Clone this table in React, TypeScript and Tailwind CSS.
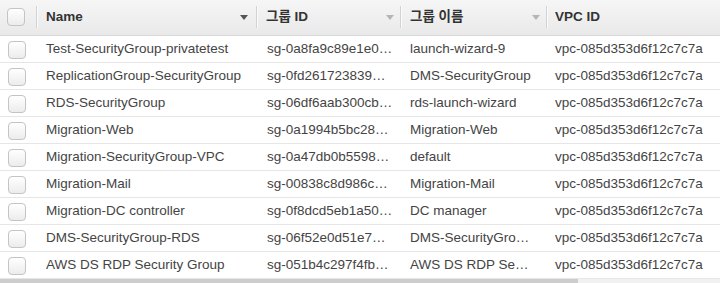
import React from "react";

const rows = [
  ["Test-SecurityGroup-privatetest", "sg-0a8fa9c89e1e0…", "launch-wizard-9", "vpc-085d353d6f12c7c7a"],
  ["ReplicationGroup-SecurityGroup", "sg-0fd261723839…", "DMS-SecurityGroup", "vpc-085d353d6f12c7c7a"],
  ["RDS-SecurityGroup", "sg-06df6aab300cb…", "rds-launch-wizard", "vpc-085d353d6f12c7c7a"],
  ["Migration-Web", "sg-0a1994b5bc28…", "Migration-Web", "vpc-085d353d6f12c7c7a"],
  ["Migration-SecurityGroup-VPC", "sg-0a47db0b5598…", "default", "vpc-085d353d6f12c7c7a"],
  ["Migration-Mail", "sg-00838c8d986c…", "Migration-Mail", "vpc-085d353d6f12c7c7a"],
  ["Migration-DC controller", "sg-0f8dcd5eb1a50…", "DC manager", "vpc-085d353d6f12c7c7a"],
  ["DMS-SecurityGroup-RDS", "sg-06f52e0d51e7…", "DMS-SecurityGro…", "vpc-085d353d6f12c7c7a"],
  ["AWS DS RDP Security Group", "sg-051b4c297f4fb…", "AWS DS RDP Se…", "vpc-085d353d6f12c7c7a"],
];

function Checkbox() {
  return (
    <div className="w-[18px] h-[18px] rounded-[4px] border border-[#c4c4c4] bg-gradient-to-b from-[#ffffff] to-[#ececec]" />
  );
}

function Sep() {
  return (
    <div className="flex h-[22px]">
      <div className="w-px bg-[#d2d2d2]" />
      <div className="w-px bg-[#fbfbfb]" />
    </div>
  );
}

function Arrow({ dark }: { dark?: boolean }) {
  return (
    <svg width="8" height="5" viewBox="0 0 8 5" className="shrink-0">
      <path d="M0 0 L8 0 L4 5 Z" fill={dark ? "#555555" : "#b5b5b5"} />
    </svg>
  );
}

export default function App() {
  return (
    <div
      className="w-[720px] h-[283px] overflow-hidden bg-white text-[13.5px] text-[#444444]"
      style={{ fontFamily: '"Liberation Sans", "Noto Sans CJK KR", Arial, sans-serif' }}
    >
      <div className="w-[860px]">
        {/* header */}
        <div className="flex h-[36px] items-center pb-[1px] border-b border-[#d9d9d9] bg-gradient-to-b from-[#f6f6f6] to-[#e9e9e9] font-bold text-[#333333]">
          <div className="w-[36px] flex items-center pl-[7px] shrink-0">
            <Checkbox />
          </div>
          <Sep />
          <div className="w-[218px] flex items-center justify-between pl-[8px] pr-[8px] shrink-0">
            <span>Name</span>
            <Arrow dark />
          </div>
          <Sep />
          <div className="w-[142px] flex items-center justify-between pl-[8px] pr-[6px] shrink-0">
            <span>그룹 ID</span>
            <Arrow />
          </div>
          <Sep />
          <div className="w-[144px] flex items-center justify-between pl-[8px] pr-[6px] shrink-0">
            <span>그룹 이름</span>
            <Arrow />
          </div>
          <Sep />
          <div className="flex-1 pl-[7px]">VPC ID</div>
        </div>
        {rows.map((r, i) => (
          <div key={i} className="flex h-[27px] items-center pt-[1px] border-b border-[#e6e6e6]">
            <div className="w-[38px] pl-[8px] shrink-0 flex items-center">
              <Checkbox />
            </div>
            <div className="w-[220px] pl-[8px] shrink-0 whitespace-nowrap">{r[0]}</div>
            <div className="w-[144px] pl-[9px] shrink-0 whitespace-nowrap">{r[1]}</div>
            <div className="w-[146px] pl-[8px] shrink-0 whitespace-nowrap">{r[2]}</div>
            <div className="flex-1 pl-[7px] whitespace-nowrap">{r[3]}</div>
          </div>
        ))}
      </div>
      {/* horizontal scrollbar */}
      <div className="flex h-[17px] w-[720px] bg-[#f1f1f1]">
        <div className="w-[578px] h-full bg-[#cdcdcd]" />
      </div>
    </div>
  );
}
